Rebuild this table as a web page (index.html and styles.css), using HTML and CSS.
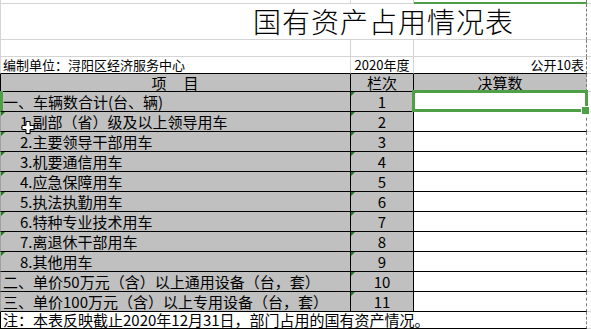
FILE: index.html
```html
<!DOCTYPE html>
<html lang="zh-CN">
<head>
<meta charset="utf-8">
<title>国有资产占用情况表</title>
<link rel="stylesheet" href="styles.css">
</head>
<body>
<div class="sheet">
  <div class="row r-top">
    <div class="cell ca"></div><div class="cell cb"></div><div class="cell cc col-sel"></div><div class="cell cd"></div>
  </div>
  <div class="row r-title">
    <div class="cell span3 title">国有资产占用情况表</div><div class="cell cd"></div>
  </div>
  <div class="row r-blank">
    <div class="cell ca"></div><div class="cell cb"></div><div class="cell cc"></div><div class="cell cd"></div>
  </div>
  <div class="row r-info">
    <div class="cell ca info-left">编制单位：浔阳区经济服务中心</div><div class="cell cb center">2020年度</div><div class="cell cc right">公开10表</div><div class="cell cd"></div>
  </div>
  <div class="row r-head">
    <div class="cell ca center item-head">项　目</div><div class="cell cb center">栏次</div><div class="cell cc center">决算数</div><div class="cell cd"></div>
  </div>
  <div class="row r-data">
    <div class="cell ca lvl1 row-mark">一、车辆数合计(台、辆)</div><div class="cell cb center tri">1</div><div class="cell cc selected"></div><div class="cell cd"></div>
  </div>
  <div class="row r-data">
    <div class="cell ca lvl2 tri">1.副部（省）级及以上领导用车</div><div class="cell cb center tri">2</div><div class="cell cc"></div><div class="cell cd"></div>
  </div>
  <div class="row r-data">
    <div class="cell ca lvl2 tri">2.主要领导干部用车</div><div class="cell cb center tri">3</div><div class="cell cc"></div><div class="cell cd"></div>
  </div>
  <div class="row r-data">
    <div class="cell ca lvl2 tri">3.机要通信用车</div><div class="cell cb center tri">4</div><div class="cell cc"></div><div class="cell cd"></div>
  </div>
  <div class="row r-data">
    <div class="cell ca lvl2 tri">4.应急保障用车</div><div class="cell cb center tri">5</div><div class="cell cc"></div><div class="cell cd"></div>
  </div>
  <div class="row r-data">
    <div class="cell ca lvl2 tri">5.执法执勤用车</div><div class="cell cb center tri">6</div><div class="cell cc"></div><div class="cell cd"></div>
  </div>
  <div class="row r-data">
    <div class="cell ca lvl2 tri">6.特种专业技术用车</div><div class="cell cb center tri">7</div><div class="cell cc"></div><div class="cell cd"></div>
  </div>
  <div class="row r-data">
    <div class="cell ca lvl2 tri">7.离退休干部用车</div><div class="cell cb center tri">8</div><div class="cell cc"></div><div class="cell cd"></div>
  </div>
  <div class="row r-data">
    <div class="cell ca lvl2 tri">8.其他用车</div><div class="cell cb center tri">9</div><div class="cell cc"></div><div class="cell cd"></div>
  </div>
  <div class="row r-data">
    <div class="cell ca lvl1">二、单价50万元（含）以上通用设备（台，套）</div><div class="cell cb center tri">10</div><div class="cell cc"></div><div class="cell cd"></div>
  </div>
  <div class="row r-data">
    <div class="cell ca lvl1">三、单价100万元（含）以上专用设备（台，套）</div><div class="cell cb center tri">11</div><div class="cell cc"></div><div class="cell cd"></div>
  </div>
  <div class="row r-note">
    <div class="cell span3 note">注：本表反映截止2020年12月31日，部门占用的国有资产情况。</div><div class="cell cd"></div>
  </div>
</div>
<svg class="cursor" width="16" height="16" viewBox="0 0 16 16" aria-hidden="true">
  <path d="M6 2.5H10V6.5H14V10.5H10V14.5H6V10.5H2V6.5H6Z" fill="#555" opacity="0.5"/>
  <path d="M5 1.5H9V5.5H13V9.5H9V13.5H5V9.5H1V5.5H5Z" fill="#fff" stroke="#000" stroke-width="1"/>
</svg>
</body>
</html>
```
FILE: styles.css
```css
* { box-sizing: border-box; margin: 0; padding: 0; }
html, body { background: #fff; }
body {
  width: 591px;
  height: 329px;
  overflow: hidden;
  position: relative;
  font-family: "Noto Sans CJK SC", "Noto Sans", sans-serif;
  color: #000;
}
.sheet { display: flex; flex-direction: column; }
.row { display: grid; grid-template-columns: 351px 63px 173px 1fr; }
.cell {
  position: relative;
  white-space: nowrap;
  border-bottom: 1px solid #d4d4d4;
}
.ca { border-left: 1px solid #d4d4d4; border-right: 1px solid #d4d4d4; }
.cb { border-right: 1px solid #d4d4d4; }
.cc { border-right: 1px dashed #7a7a7a; }
.span3 { grid-column: span 3; border-left: 1px solid #d4d4d4; border-right: 1px dashed #7a7a7a; }
.center { text-align: center; }
.right { text-align: right; padding-right: 2px; }

.r-top { height: 4px; }
.col-sel { border-bottom: 2px solid #4e9f45; }

.r-title { height: 36px; }
.title {
  font-size: 28px;
  letter-spacing: 1px;
  line-height: 35px;
  padding-left: 252px;
  font-weight: 300;
}

.r-blank { height: 17px; }

.r-info { height: 17px; font-size: 13px; line-height: 16px; }
.r-info .ca, .r-info .cb, .r-info .cc { border-bottom-color: #000; }
.info-left { padding-left: 2px; }

.r-head { height: 18px; font-size: 15px; line-height: 17px; }
.r-head .ca, .r-head .cb, .r-head .cc { background: #c0c0c0; border-bottom-color: #000; }
.r-head .ca, .r-head .cb { border-right-color: #000; }
.r-head .ca { border-left-color: #000; }
.item-head { letter-spacing: 1px; }

.r-data { height: 20px; font-size: 15px; line-height: 18px; }
.r-data .cell { padding-top: 1px; }
.r-data .ca, .r-data .cb { background: #c0c0c0; border-color: #000; }
.r-data .ca { border-left-color: #a0a0a0; }
.r-data .cc { border-bottom-color: #000; }
.lvl1 { padding-left: 2px; }
.lvl2 { padding-left: 19px; }

.tri::before {
  content: "";
  position: absolute;
  top: 0;
  left: 0;
  border-top: 4px solid #1f7d1f;
  border-right: 4px solid transparent;
}
.row-mark::before {
  content: "";
  position: absolute;
  left: -1px;
  top: -1px;
  bottom: 0;
  width: 3px;
  background: #4e9f45;
}

.selected::after {
  content: "";
  position: absolute;
  top: -2px;
  left: -2px;
  right: -2px;
  bottom: -1px;
  border: 3px solid #4e9f45;
  z-index: 2;
}
.selected::before {
  content: "";
  position: absolute;
  right: -4px;
  bottom: -4px;
  width: 7px;
  height: 7px;
  background: #4e9f45;
  border: 1px solid #fff;
  z-index: 3;
}

.r-note { height: 17px; font-size: 15px; line-height: 16px; }
.note { padding-left: 2px; border-left-color: #000; border-bottom-color: #000; }

.cursor { position: absolute; left: 21px; top: 120px; }
```
